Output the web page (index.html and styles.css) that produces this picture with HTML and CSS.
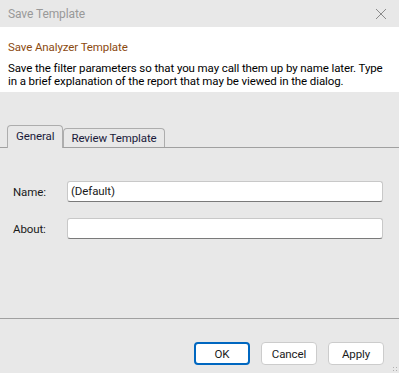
FILE: index.html
```html
<!DOCTYPE html>
<html lang="en">
<head>
    <meta charset="UTF-8">
    <title>Save Template</title>
    <link rel="stylesheet" href="styles.css">
</head>
<body>
    <div class="dialog">
        <div class="titlebar">
            <span class="title">Save Template</span>
            <svg class="close" width="12" height="12" viewBox="0 0 12 12">
                <path d="M1 1 L11 11 M11 1 L1 11" stroke="#8a8a8a" stroke-width="1" fill="none"/>
            </svg>
        </div>

        <div class="header">
            <p class="heading">Save Analyzer Template</p>
            <p class="desc">Save the filter parameters so that you may call them up by name later. Type in a brief explanation of the report that may be viewed in the dialog.</p>
        </div>

        <div class="tabstrip">
            <div class="tab active">General</div>
            <div class="tab">Review Template</div>
        </div>

        <div class="pane">
            <div class="row">
                <label class="label">Name:</label>
                <div class="inputbox">(Default)</div>
            </div>
            <div class="row">
                <label class="label">About:</label>
                <div class="inputbox"></div>
            </div>
        </div>

        <div class="footer">
            <button class="button default">OK</button>
            <button class="button">Cancel</button>
            <button class="button">Apply</button>
            <span class="grip"></span>
        </div>
    </div>
</body>
</html>
```

FILE: styles.css
```css
body {
    margin: 0;
    padding: 0;
    font-family: Roboto, 'Noto Sans', sans-serif;
    font-size: 11.5px;
    letter-spacing: -0.1px;
    background-color: #e8e8e8;
}

.dialog {
    width: 399px;
    height: 373px;
    display: flex;
    flex-direction: column;
    background-color: #e8e8e8;
    position: relative;
}

.titlebar {
    height: 27px;
    display: flex;
    align-items: center;
    justify-content: space-between;
    padding: 0 12px 0 8px;
}

.title {
    color: #999999;
    font-size: 12px;
}

.close {
    display: block;
}

.header {
    background: #ffffff;
    height: 65px;
    padding: 13px 12px 0 8px;
    box-sizing: border-box;
}

p {
    margin: 0;
}

.heading {
    color: #8b4a10;
    line-height: 15px;
}

.desc {
    margin-top: 7px;
    color: #000000;
    line-height: 13px;
}

.tabstrip {
    margin-top: 33px;
    height: 22px;
    display: flex;
    align-items: flex-end;
    padding-left: 7px;
}

.tab {
    border: 1px solid #adadad;
    border-bottom: none;
    border-radius: 4px 4px 0 0;
    height: 18px;
    padding: 0 7px;
    line-height: 18px;
    color: #1a1a3a;
    background: #e8e8e8;
}

.tab.active {
    line-height: 20px;
    padding: 0 8px;
    position: relative;
    z-index: 1;
    margin-bottom: -1px;
    height: 22px;
}

.pane {
    border-top: 1px solid #a0a0a0;
    border-bottom: 1px solid #a0a0a0;
    height: 172px;
    box-sizing: border-box;
    padding-top: 33px;
}

.row {
    display: flex;
    align-items: center;
    margin-bottom: 16px;
}

.label {
    width: 54px;
    padding-left: 13px;
    color: #1a1a1a;
}

.inputbox {
    width: 316px;
    height: 21px;
    box-sizing: border-box;
    background: #ffffff;
    border: 1px solid #c8c8c8;
    border-bottom-color: #7a7a7a;
    border-radius: 3px;
    padding: 0 3px;
    line-height: 19px;
    color: #1a1a1a;
}

.footer {
    display: flex;
    justify-content: flex-end;
    gap: 11px;
    padding: 23px 15px 0 0;
}

.button {
    width: 56px;
    height: 23px;
    background: #ffffff;
    border: 1px solid #cccccc;
    border-radius: 4px;
    font-family: Roboto, 'Noto Sans', sans-serif;
    font-size: 11.5px;
    letter-spacing: -0.1px;
    color: #1a1a1a;
    padding: 0;
}

.button.default {
    border: 2px solid #0067c0;
}

.grip {
    position: absolute;
    right: 1px;
    bottom: 1px;
    width: 6px;
    height: 6px;
    background-image: radial-gradient(circle, #b0b0b0 1px, transparent 1px);
    background-size: 3px 3px;
}
```
